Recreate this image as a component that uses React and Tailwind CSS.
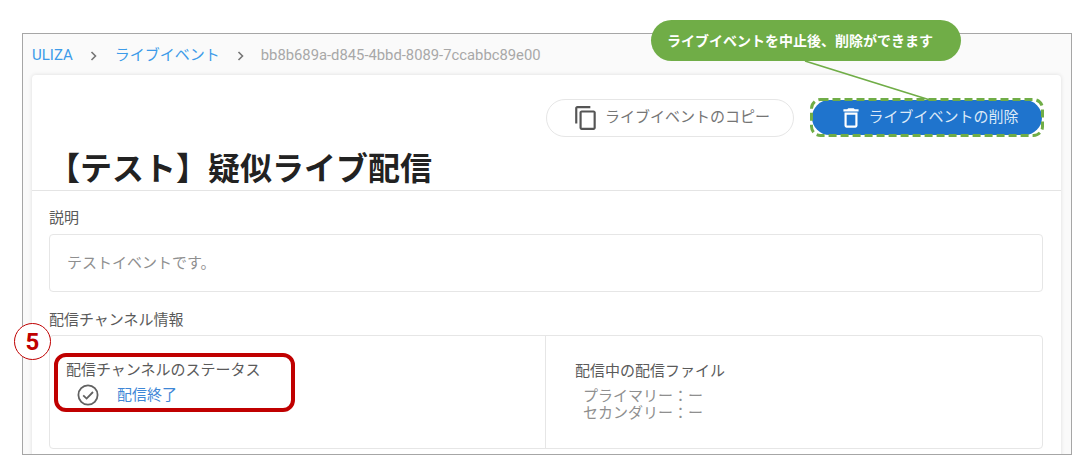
const font = { fontFamily: '"Roboto","Noto Sans CJK JP",sans-serif' };

function Chevron() {
  return (
    <svg width="8" height="10" viewBox="0 0 8 10" className="mx-[17px]">
      <path d="M1.5 1 L5.5 5 L1.5 9" fill="none" stroke="#757575" strokeWidth="1.6" />
    </svg>
  );
}

export default function App() {
  return (
    <div className="relative w-[1081px] h-[466px] bg-white overflow-hidden pt-[33px] pl-[22px]" style={font}>
      <div className="w-[1050px] h-[422px] border border-[#a6a6a6] bg-[#fafafa] overflow-hidden pl-[9px]">
        <div className="h-[41px] flex items-center text-[15px] pt-[2px]">
          <span className="text-[#3d9be9]">ULIZA</span>
          <Chevron />
          <span className="text-[#3d9be9]">ライブイベント</span>
          <Chevron />
          <span className="text-[#a8a8a8] text-[14.8px] -ml-[1px]">bb8b689a-d845-4bbd-8089-7ccabbc89e00</span>
        </div>
        <div className="w-[1029px] h-[400px] bg-white rounded-t-[4px] shadow-[0_0_4px_rgba(0,0,0,0.12)]">
          <div className="h-[116px] border-b border-[#e4e4e4]">
            <div className="flex justify-end items-center gap-[16px] pt-[23px] pr-[17px]">
              <button className="w-[248px] h-[38px] rounded-full border border-[#e6e6e6] bg-white flex items-center justify-center gap-[6px] pl-[3px] text-[15px] text-[#757575]">
                <svg width="26" height="26" viewBox="0 0 24 24" fill="#555555"><path d="M16 1H4c-1.1 0-2 .9-2 2v14h2V3h12V1zm3 4H8c-1.1 0-2 .9-2 2v14c0 1.1.9 2 2 2h11c1.1 0 2-.9 2-2V7c0-1.1-.9-2-2-2zm0 16H8V7h11v14z" /></svg>
                ライブイベントのコピー
              </button>
              <div className="relative p-[2px]">
                <button className="w-[230px] h-[35px] rounded-full bg-[#1f74cd] flex items-center justify-center gap-[4px] pl-[3px] text-[15px] text-[#dce9f7]">
                  <svg width="26" height="26" viewBox="0 0 24 24" fill="#ffffff"><path d="M6 19c0 1.1.9 2 2 2h8c1.1 0 2-.9 2-2V7H6v12zM8 9h8v10H8V9zm7.5-5l-1-1h-5l-1 1H5v2h14V4z" /></svg>
                  ライブイベントの削除
                </button>
                <svg className="absolute left-0 top-0" width="234" height="39" viewBox="0 0 234 39" fill="none">
                  <rect x="1.5" y="1.5" width="231" height="36" rx="9" stroke="#70ad47" strokeWidth="3" strokeDasharray="8 4" />
                </svg>
              </div>
            </div>
            <h1 className="ml-[16px] mt-[14px] text-[32px] leading-[36px] font-bold text-[#222222]">【テスト】疑似ライブ配信</h1>
          </div>
          <div className="pl-[17px] pr-[18px] text-[15px] text-[#5a5a5a]">
            <div className="pt-[17px] leading-[20px]">説明</div>
            <div className="mt-[6px] h-[58px] border border-[#e6e6e6] rounded-[4px] flex items-center pl-[17px] text-[#8f8f8f]">テストイベントです。</div>
            <div className="mt-[18px] leading-[20px]">配信チャンネル情報</div>
            <div className="mt-[5px] h-[114px] border border-[#e6e6e6] rounded-[4px] flex">
              <div className="w-[496px] border-r border-[#e6e6e6] pl-[4px] pt-[17px]">
                <div className="w-[241px] h-[59px] border-[4px] border-[#c00000] rounded-[12px] pl-[8px] pt-[3px]">
                  <div className="leading-[20px]">配信チャンネルのステータス</div>
                  <div className="flex items-center mt-[3px] pl-[10px] gap-[17px]">
                    <svg width="24" height="24" viewBox="0 0 24 24" fill="none" stroke="#616161" strokeWidth="1.8">
                      <circle cx="12" cy="12" r="9.6" />
                      <path d="M7.2 12.4 L10.6 15.6 L17 9" />
                    </svg>
                    <span className="text-[#3f87d6]">配信終了</span>
                  </div>
                </div>
              </div>
              <div className="pl-[29px] pt-[25px]">
                <div className="leading-[20px] text-[#5a5a5a]">配信中の配信ファイル</div>
                <div className="mt-[7px] pl-[8px] leading-[17px] text-[#8f8f8f]">
                  <div>プライマリー：ー</div>
                  <div>セカンダリー：ー</div>
                </div>
              </div>
            </div>
          </div>
        </div>
      </div>

      <svg className="absolute left-[800px] top-[58px]" width="135" height="45" viewBox="0 0 135 45">
        <path d="M5 3 L130 42" stroke="#70ad47" strokeWidth="1.8" fill="none" />
      </svg>
      <div className="absolute left-[651px] top-[20px] w-[310px] h-[41px] rounded-full bg-[#70ad47] text-white text-sm font-bold flex items-center pl-[16px]">
        ライブイベントを中止後、削除ができます
      </div>
      <div className="absolute left-[14px] top-[323px] w-[37px] h-[37px] rounded-full border border-[#c00000] bg-white text-[#c00000] text-[24px] leading-none font-bold flex items-center justify-center">5</div>
    </div>
  );
}
